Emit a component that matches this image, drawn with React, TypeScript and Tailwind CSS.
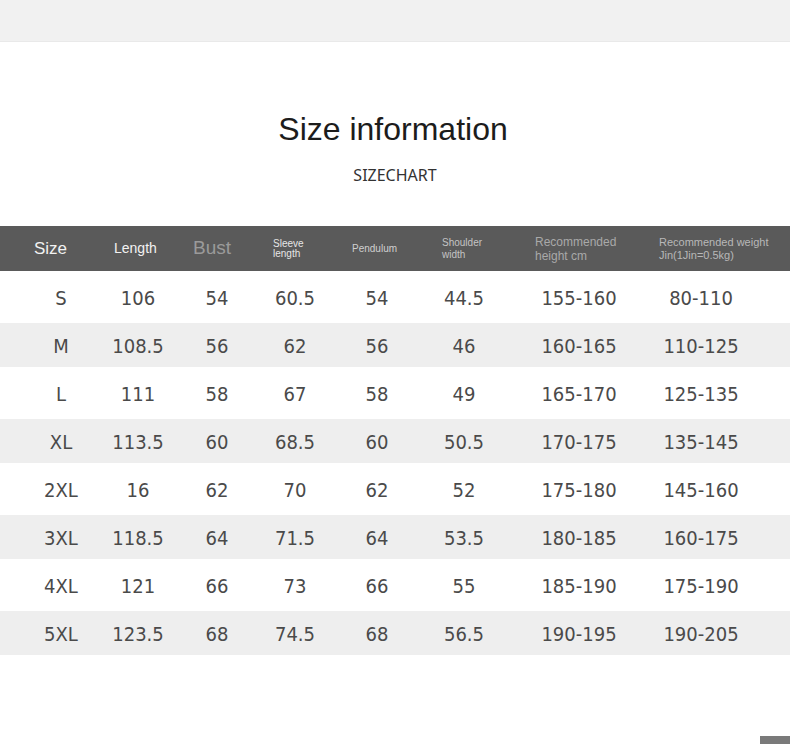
const rows = [
  ["S", "106", "54", "60.5", "54", "44.5", "155-160", "80-110"],
  ["M", "108.5", "56", "62", "56", "46", "160-165", "110-125"],
  ["L", "111", "58", "67", "58", "49", "165-170", "125-135"],
  ["XL", "113.5", "60", "68.5", "60", "50.5", "170-175", "135-145"],
  ["2XL", "16", "62", "70", "62", "52", "175-180", "145-160"],
  ["3XL", "118.5", "64", "71.5", "64", "53.5", "180-185", "160-175"],
  ["4XL", "121", "66", "73", "66", "55", "185-190", "175-190"],
  ["5XL", "123.5", "68", "74.5", "68", "56.5", "190-195", "190-205"],
];

const grid = "grid grid-cols-[82px_72px_86px_70px_94px_80px_150px_94px] pl-[20px]";

export default function App() {
  return (
    <div className="w-[790px] h-[744px] bg-white relative overflow-hidden font-['Liberation_Sans',Arial,sans-serif]">
      <div className="h-[42px] bg-[#f1f1f1] border-b border-[#e9e9e9]" />

      <h1 className="mt-[67px] pr-[4px] text-center text-[32px] leading-[40px] text-[#1c1c1c]">Size information</h1>
      <p className="mt-[16px] text-center text-[16px] leading-[20px] text-[#333] font-['Noto_Sans',sans-serif]">
        SIZECHART
      </p>

      {/* header */}
      <div className={`${grid} mt-[41px] h-[45px] bg-[#5a5a5a] items-center whitespace-nowrap`}>
        <div className="pl-[14px] text-[17px] text-[#f2f2f2]">Size</div>
        <div className="pl-[12px] text-[14px] text-[#f2f2f2]">Length</div>
        <div className="pl-[19px] text-[19px] text-[#9a9a9a]">Bust</div>
        <div className="pl-[13px] text-[10px] leading-[10px] text-[#e6e6e6]">
          Sleeve
          <br />
          length
        </div>
        <div className="pl-[22px] text-[10px] text-[#cfcfcf]">Pendulum</div>
        <div className="pl-[18px] text-[10px] leading-[12px] text-[#c4c4c4]">
          Shoulder
          <br />
          width
        </div>
        <div className="pl-[31px] text-[12px] leading-[14px] text-[#a9a9a9]">
          Recommended
          <br />
          height cm
        </div>
        <div className="pl-[5px] text-[11px] leading-[13px] text-[#b8b8b8]">
          Recommended weight
          <br />
          Jin(1Jin=0.5kg)
        </div>
      </div>

      {/* body */}
      <div className="font-['DejaVu_Sans_Condensed','DejaVu_Sans',sans-serif] text-[20px] text-[#4a4a4a]">
        {rows.map((r, i) => (
          <div
            key={r[0]}
            className={`${grid} items-center pt-[2px] ${i % 2 === 0 ? "h-[52px] bg-white" : "h-[44px] bg-[#eeeeee]"}`}
          >
            {r.map((v, j) => (
              <div key={j} className="flex justify-center whitespace-nowrap">
                {v}
              </div>
            ))}
          </div>
        ))}
      </div>

      <div className="absolute right-0 bottom-0 w-[30px] h-[8px] bg-[#7a7a7a]" />
    </div>
  );
}
